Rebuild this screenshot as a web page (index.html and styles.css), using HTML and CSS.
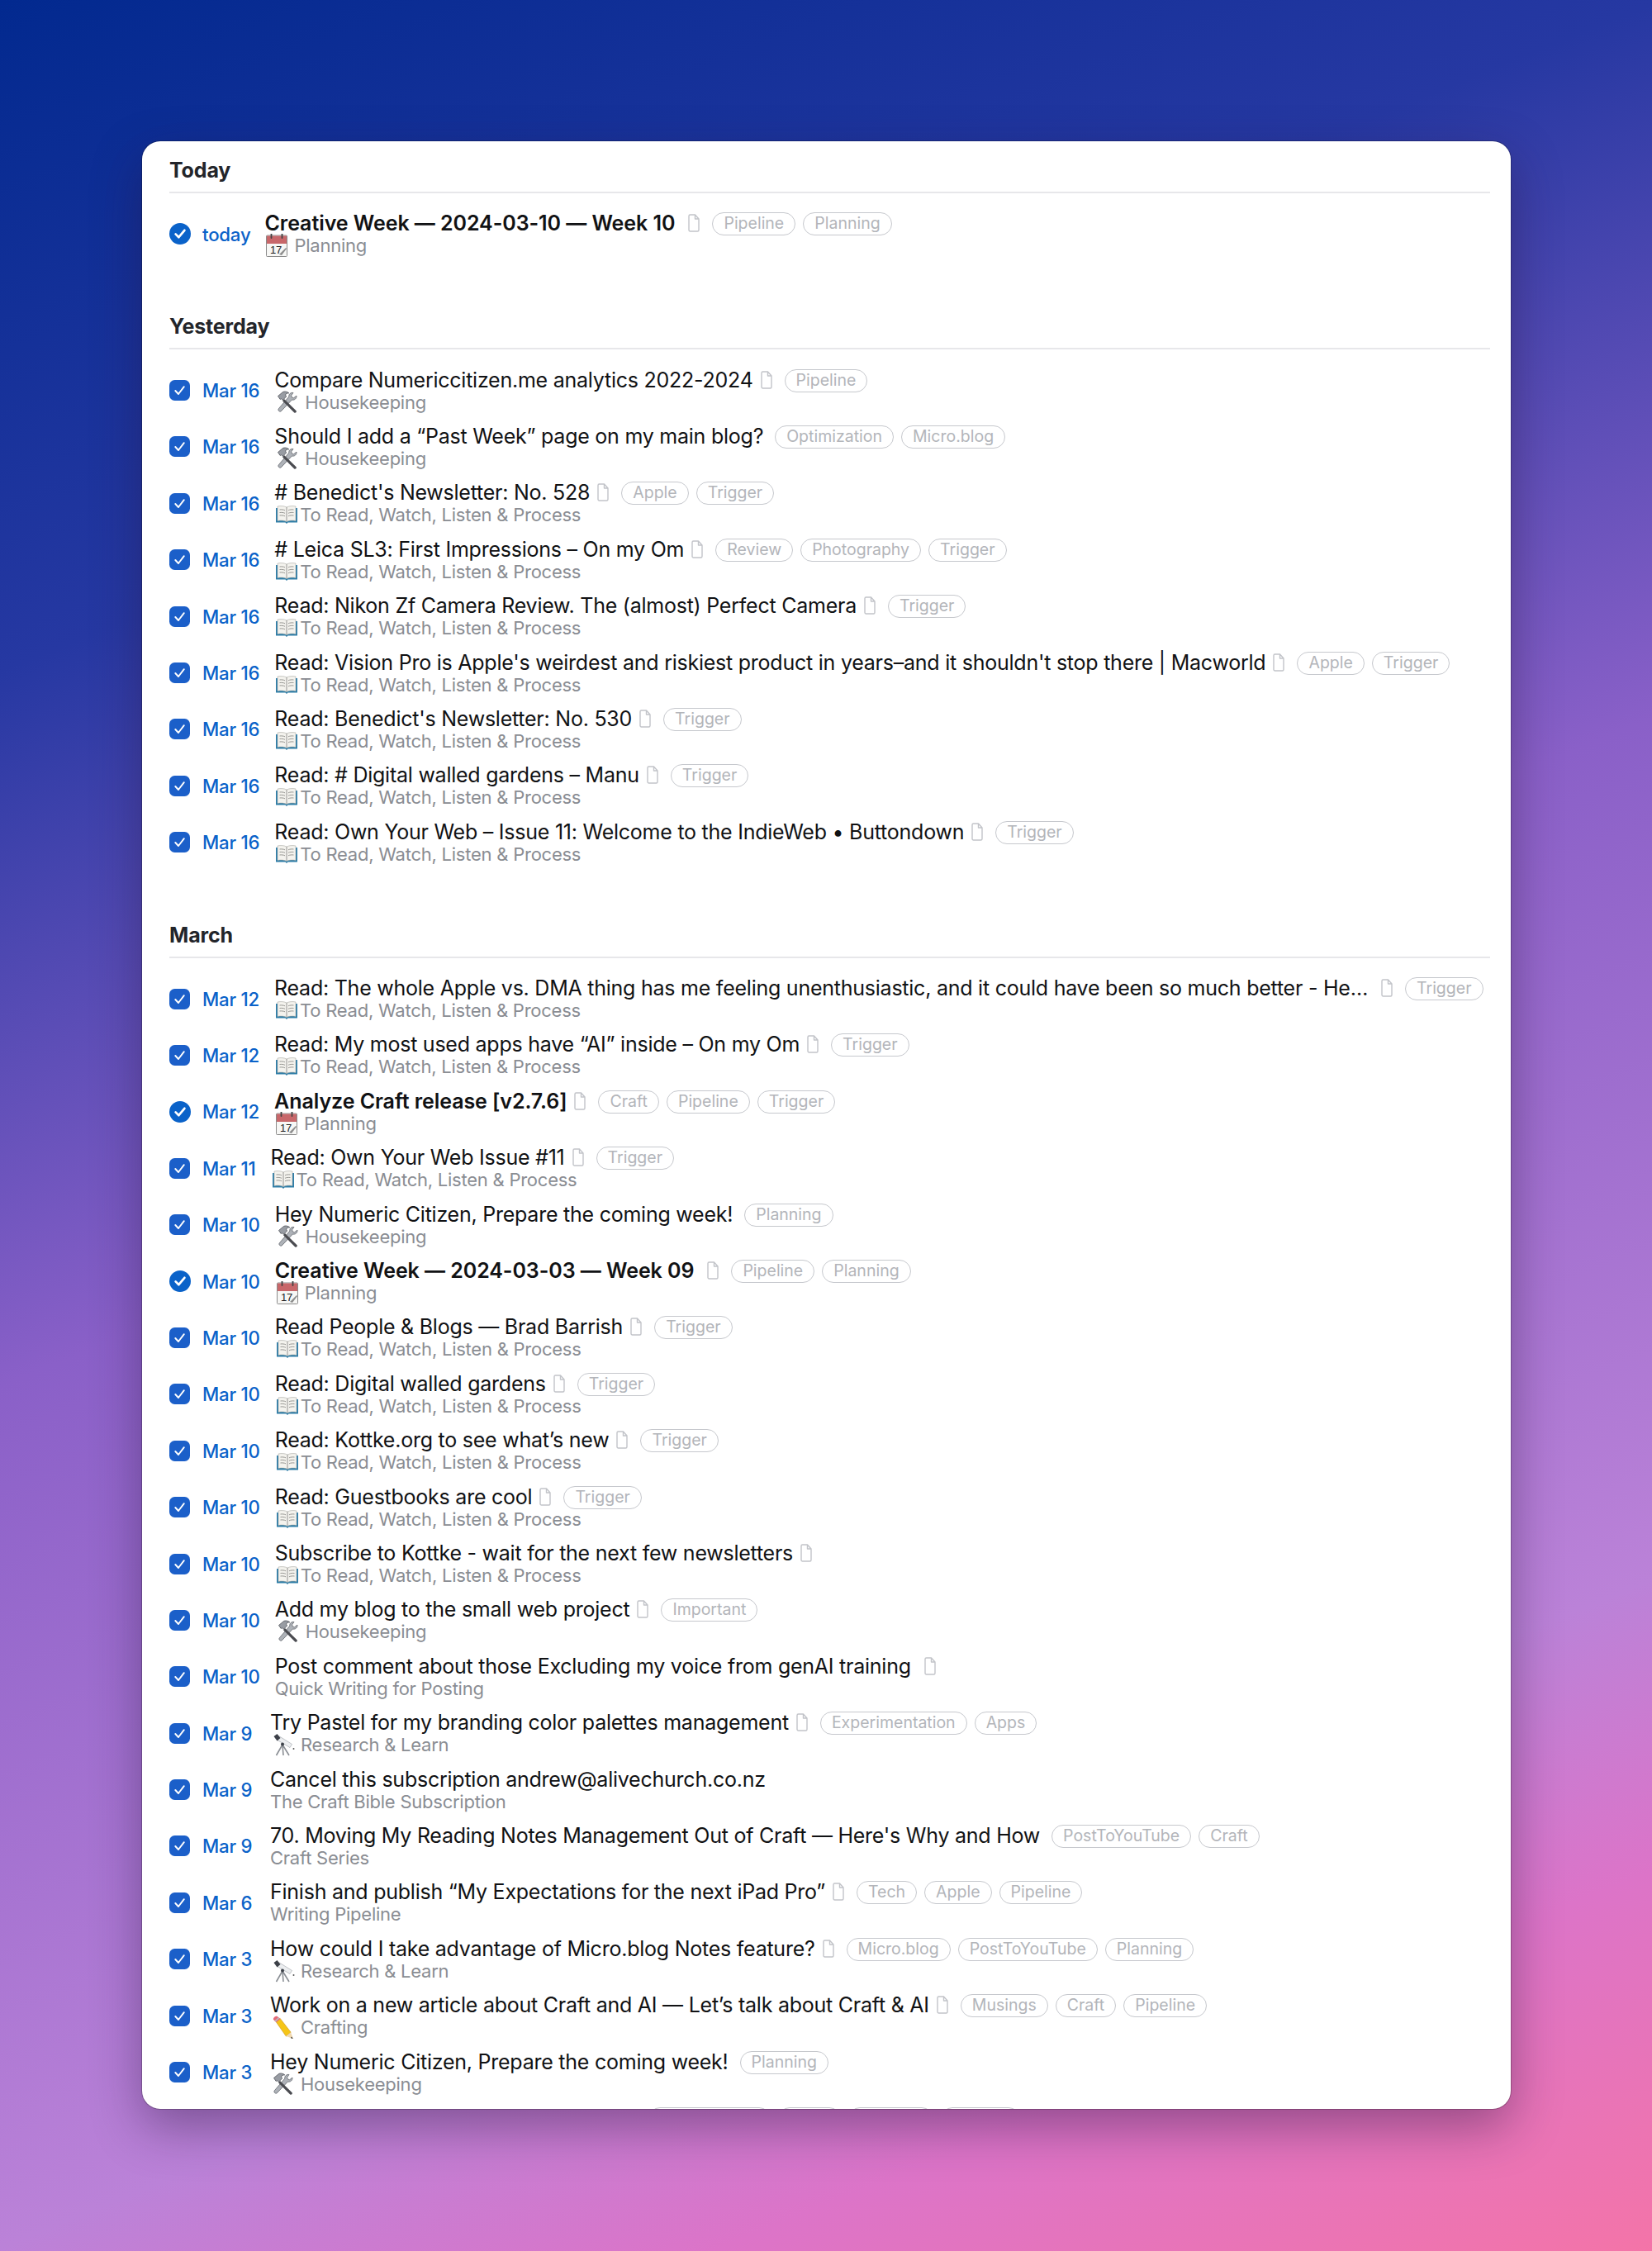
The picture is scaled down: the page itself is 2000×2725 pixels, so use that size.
FILE: index.html
```html
<!DOCTYPE html>
<html lang="en">
  <head>
    <meta charset="UTF-8" />
    <title>Logbook</title>
    <link rel="stylesheet" href="styles.css">
  </head>
  <body>
    <svg class="sprites" width="0" height="0">
      <symbol id="box" viewBox="0 0 25 25">
        <rect width="25" height="25" rx="6.5" fill="#1b5fc9" />
        <path d="M7.3 13l3.7 4 6.8-8.8" fill="none" stroke="#fff" stroke-width="1.9" stroke-linecap="round" stroke-linejoin="round" />
      </symbol>
      <symbol id="circle" viewBox="0 0 26 26">
        <circle cx="13" cy="13" r="13" fill="#0a62c9" />
        <path d="M7.600 13.400l3.800 3.800 7-8.400" fill="none" stroke="#fff" stroke-width="2.700" stroke-linecap="round" stroke-linejoin="round" />
      </symbol>
      <symbol id="doc" viewBox="0 0 14 22">
        <path d="M2.500 1h6l4.500 5v13.500a1.500 1.500 0 0 1-1.500 1.500h-9A1.500 1.500 0 0 1 1 19.500V2.500A1.500 1.500 0 0 1 2.500 1zM8.500 1v5H13" fill="none" stroke="#c2c4c9" stroke-width="1.400" stroke-linejoin="round" />
      </symbol>
      <symbol id="tools" viewBox="0 0 28 28">
        <path d="M21 2.500c-3-.6-5.600 1.600-5.200 4.700L3.300 21.800c-1.300 1.600.9 4.300 2.900 3.100L19.400 11c2.900.8 6-1.500 5.600-4.900l-3.400 2.600-2.400-.7-.5-2.300z" fill="#aeb2b8" stroke="#62666c" stroke-width=".8" />
        <path d="M10 10l14.600 14.300c1.100 1.300-1.100 3.400-2.400 2.200L8 12.200z" fill="#4a4b50" />
        <path d="M2.500 6.500L8.800 1.300c2.700-.8 5.400 0 7 1.600-2.200 0-3.800.600-4.300 2.100l1.100 2.100-4.300 4.300-1.600-1.600-1.600.600z" fill="#989ca3" stroke="#53565c" stroke-width=".8" />
      </symbol>
      <symbol id="book" viewBox="0 0 26 22">
        <path d="M0 3h26v17.500H14.500l-1.500 1.500-1.500-1.500H0z" fill="#2e7ea8" />
        <path d="M2 1c4-.8 8-.5 11 1 3-1.500 7-1.800 11-1v17.500c-4-.8-8-.5-11 1-3-1.500-7-1.800-11-1z" fill="#f4f3ee" stroke="#a9a9a4" stroke-width=".6" />
        <path d="M13 2v17M4.500 5c2.500-.3 4.800 0 6.500.8M4.500 8.500c2.500-.3 4.800 0 6.500.8M4.500 12c2.500-.3 4.800 0 6.500.8M15 5.800c1.700-.8 4-1.100 6.500-.8M15 9.300c1.700-.8 4-1.100 6.500-.8M15 12.800c1.700-.8 4-1.100 6.500-.8" fill="none" stroke="#8b8b88" stroke-width=".9" />
      </symbol>
      <symbol id="calendar" viewBox="0 0 26 28">
        <rect x=".5" y="2" width="25" height="25.500" rx="1" fill="#f7f7f5" stroke="#8b8b8b" />
        <rect x="1" y="2.500" width="24" height="9.500" fill="#c8676a" />
        <path d="M6.500 0v5M19.500 0v5" stroke="#444" stroke-width="1.800" stroke-linecap="round" />
        <path d="M16 25l8-8 1 1-6 8z" fill="#8d8d8d" />
      </symbol>
      <symbol id="telescope" viewBox="0 0 28 28">
        <path d="M6 8l16 9.500 2.500-4L8.500 3.500z" fill="#eceef0" stroke="#a8acb2" stroke-width=".7" />
        <path d="M2.500 4l4-3 4 5-4 3.500z" fill="#3c4048" />
        <path d="M13 14L5.500 27M13 14l1 13M13 14l8 13" fill="none" stroke="#8a8e94" stroke-width="1.600" />
        <circle cx="13" cy="13.500" r="2" fill="#3c4048" />
        <circle cx="26.500" cy="19" r="1" fill="#555" />
      </symbol>
      <symbol id="pencil" viewBox="0 0 28 30">
        <path d="M5.500 8l5-4.500L24 21l-6 5z" fill="#f5c518" stroke="#c78f12" stroke-width=".6" />
        <path d="M2 5c-.5-2 2.500-5 5-4l4 3-5.500 4.500z" fill="#e66a78" />
        <path d="M3.800 6.200l4.500-4 1.500 1-5 4.500z" fill="#b8bcc2" />
        <path d="M18 26l6-5 2.800 8z" fill="#f0d8b0" />
        <path d="M25 26.500l1.800 2.500-3-.9z" fill="#333" />
      </symbol>
    </svg>

    <main class="window">
      <section class="group">
        <h2 class="group-head">Today</h2>
        <ul class="rows">
          <li class="row row-today">
            <svg class="check check-round"><use href="#circle" /></svg>
            <span class="date">today</span>
            <div class="body">
              <div class="line"><span class="title strong">Creative Week — 2024-03-10 — Week 10</span><svg class="doc doc-wide"><use href="#doc" /></svg><span class="tag">Pipeline</span><span class="tag">Planning</span></div>
              <div class="sub"><svg class="emoji em-cal" viewBox="0 0 26 28"><use href="#calendar" width="26" height="28" /><text x="5" y="24" class="cal-day">17</text></svg>Planning</div>
            </div>
          </li>
        </ul>
      </section>

      <section class="group">
        <h2 class="group-head">Yesterday</h2>
        <ul class="rows">
          <li class="row">
            <svg class="check"><use href="#box" /></svg>
            <span class="date">Mar 16</span>
            <div class="body">
              <div class="line"><span class="title">Compare Numericcitizen.me analytics 2022-2024</span><svg class="doc"><use href="#doc" /></svg><span class="tag">Pipeline</span></div>
              <div class="sub"><svg class="emoji em-tools"><use href="#tools" /></svg>Housekeeping</div>
            </div>
          </li>
          <li class="row">
            <svg class="check"><use href="#box" /></svg>
            <span class="date">Mar 16</span>
            <div class="body">
              <div class="line"><span class="title">Should I add a “Past Week” page on my main blog?</span><span class="tag tag-first">Optimization</span><span class="tag">Micro.blog</span></div>
              <div class="sub"><svg class="emoji em-tools"><use href="#tools" /></svg>Housekeeping</div>
            </div>
          </li>
          <li class="row">
            <svg class="check"><use href="#box" /></svg>
            <span class="date">Mar 16</span>
            <div class="body">
              <div class="line"><span class="title"># Benedict's Newsletter: No. 528</span><svg class="doc"><use href="#doc" /></svg><span class="tag">Apple</span><span class="tag">Trigger</span></div>
              <div class="sub"><svg class="emoji em-book"><use href="#book" /></svg>To Read, Watch, Listen &amp; Process</div>
            </div>
          </li>
          <li class="row">
            <svg class="check"><use href="#box" /></svg>
            <span class="date">Mar 16</span>
            <div class="body">
              <div class="line"><span class="title"># Leica SL3: First Impressions – On my Om</span><svg class="doc"><use href="#doc" /></svg><span class="tag">Review</span><span class="tag">Photography</span><span class="tag">Trigger</span></div>
              <div class="sub"><svg class="emoji em-book"><use href="#book" /></svg>To Read, Watch, Listen &amp; Process</div>
            </div>
          </li>
          <li class="row">
            <svg class="check"><use href="#box" /></svg>
            <span class="date">Mar 16</span>
            <div class="body">
              <div class="line"><span class="title">Read: Nikon Zf Camera Review. The (almost) Perfect Camera</span><svg class="doc"><use href="#doc" /></svg><span class="tag">Trigger</span></div>
              <div class="sub"><svg class="emoji em-book"><use href="#book" /></svg>To Read, Watch, Listen &amp; Process</div>
            </div>
          </li>
          <li class="row">
            <svg class="check"><use href="#box" /></svg>
            <span class="date">Mar 16</span>
            <div class="body">
              <div class="line"><span class="title">Read: Vision Pro is Apple's weirdest and riskiest product in years–and it shouldn't stop there | Macworld</span><svg class="doc"><use href="#doc" /></svg><span class="tag">Apple</span><span class="tag">Trigger</span></div>
              <div class="sub"><svg class="emoji em-book"><use href="#book" /></svg>To Read, Watch, Listen &amp; Process</div>
            </div>
          </li>
          <li class="row">
            <svg class="check"><use href="#box" /></svg>
            <span class="date">Mar 16</span>
            <div class="body">
              <div class="line"><span class="title">Read: Benedict's Newsletter: No. 530</span><svg class="doc"><use href="#doc" /></svg><span class="tag">Trigger</span></div>
              <div class="sub"><svg class="emoji em-book"><use href="#book" /></svg>To Read, Watch, Listen &amp; Process</div>
            </div>
          </li>
          <li class="row">
            <svg class="check"><use href="#box" /></svg>
            <span class="date">Mar 16</span>
            <div class="body">
              <div class="line"><span class="title">Read: # Digital walled gardens – Manu</span><svg class="doc"><use href="#doc" /></svg><span class="tag">Trigger</span></div>
              <div class="sub"><svg class="emoji em-book"><use href="#book" /></svg>To Read, Watch, Listen &amp; Process</div>
            </div>
          </li>
          <li class="row">
            <svg class="check"><use href="#box" /></svg>
            <span class="date">Mar 16</span>
            <div class="body">
              <div class="line"><span class="title">Read: Own Your Web – Issue 11: Welcome to the IndieWeb • Buttondown</span><svg class="doc"><use href="#doc" /></svg><span class="tag">Trigger</span></div>
              <div class="sub"><svg class="emoji em-book"><use href="#book" /></svg>To Read, Watch, Listen &amp; Process</div>
            </div>
          </li>
        </ul>
      </section>

      <section class="group">
        <h2 class="group-head">March</h2>
        <ul class="rows">
          <li class="row">
            <svg class="check"><use href="#box" /></svg>
            <span class="date">Mar 12</span>
            <div class="body">
              <div class="line"><span class="title">Read: The whole Apple vs. DMA thing has me feeling unenthusiastic, and it could have been so much better - He…</span><svg class="doc doc-wide"><use href="#doc" /></svg><span class="tag">Trigger</span></div>
              <div class="sub"><svg class="emoji em-book"><use href="#book" /></svg>To Read, Watch, Listen &amp; Process</div>
            </div>
          </li>
          <li class="row">
            <svg class="check"><use href="#box" /></svg>
            <span class="date">Mar 12</span>
            <div class="body">
              <div class="line"><span class="title">Read: My most used apps have “AI” inside – On my Om</span><svg class="doc"><use href="#doc" /></svg><span class="tag">Trigger</span></div>
              <div class="sub"><svg class="emoji em-book"><use href="#book" /></svg>To Read, Watch, Listen &amp; Process</div>
            </div>
          </li>
          <li class="row">
            <svg class="check check-round"><use href="#circle" /></svg>
            <span class="date">Mar 12</span>
            <div class="body">
              <div class="line"><span class="title strong">Analyze Craft release [v2.7.6]</span><svg class="doc"><use href="#doc" /></svg><span class="tag">Craft</span><span class="tag">Pipeline</span><span class="tag">Trigger</span></div>
              <div class="sub"><svg class="emoji em-cal" viewBox="0 0 26 28"><use href="#calendar" width="26" height="28" /><text x="5" y="24" class="cal-day">17</text></svg>Planning</div>
            </div>
          </li>
          <li class="row">
            <svg class="check"><use href="#box" /></svg>
            <span class="date">Mar 11</span>
            <div class="body">
              <div class="line"><span class="title">Read: Own Your Web Issue #11</span><svg class="doc"><use href="#doc" /></svg><span class="tag">Trigger</span></div>
              <div class="sub"><svg class="emoji em-book"><use href="#book" /></svg>To Read, Watch, Listen &amp; Process</div>
            </div>
          </li>
          <li class="row">
            <svg class="check"><use href="#box" /></svg>
            <span class="date">Mar 10</span>
            <div class="body">
              <div class="line"><span class="title">Hey Numeric Citizen, Prepare the coming week!</span><span class="tag tag-first">Planning</span></div>
              <div class="sub"><svg class="emoji em-tools"><use href="#tools" /></svg>Housekeeping</div>
            </div>
          </li>
          <li class="row">
            <svg class="check check-round"><use href="#circle" /></svg>
            <span class="date">Mar 10</span>
            <div class="body">
              <div class="line"><span class="title strong">Creative Week — 2024-03-03 — Week 09</span><svg class="doc doc-wide"><use href="#doc" /></svg><span class="tag">Pipeline</span><span class="tag">Planning</span></div>
              <div class="sub"><svg class="emoji em-cal" viewBox="0 0 26 28"><use href="#calendar" width="26" height="28" /><text x="5" y="24" class="cal-day">17</text></svg>Planning</div>
            </div>
          </li>
          <li class="row">
            <svg class="check"><use href="#box" /></svg>
            <span class="date">Mar 10</span>
            <div class="body">
              <div class="line"><span class="title">Read People &amp; Blogs — Brad Barrish</span><svg class="doc"><use href="#doc" /></svg><span class="tag">Trigger</span></div>
              <div class="sub"><svg class="emoji em-book"><use href="#book" /></svg>To Read, Watch, Listen &amp; Process</div>
            </div>
          </li>
          <li class="row">
            <svg class="check"><use href="#box" /></svg>
            <span class="date">Mar 10</span>
            <div class="body">
              <div class="line"><span class="title">Read: Digital walled gardens</span><svg class="doc"><use href="#doc" /></svg><span class="tag">Trigger</span></div>
              <div class="sub"><svg class="emoji em-book"><use href="#book" /></svg>To Read, Watch, Listen &amp; Process</div>
            </div>
          </li>
          <li class="row">
            <svg class="check"><use href="#box" /></svg>
            <span class="date">Mar 10</span>
            <div class="body">
              <div class="line"><span class="title">Read: Kottke.org to see what’s new</span><svg class="doc"><use href="#doc" /></svg><span class="tag">Trigger</span></div>
              <div class="sub"><svg class="emoji em-book"><use href="#book" /></svg>To Read, Watch, Listen &amp; Process</div>
            </div>
          </li>
          <li class="row">
            <svg class="check"><use href="#box" /></svg>
            <span class="date">Mar 10</span>
            <div class="body">
              <div class="line"><span class="title">Read: Guestbooks are cool</span><svg class="doc"><use href="#doc" /></svg><span class="tag">Trigger</span></div>
              <div class="sub"><svg class="emoji em-book"><use href="#book" /></svg>To Read, Watch, Listen &amp; Process</div>
            </div>
          </li>
          <li class="row">
            <svg class="check"><use href="#box" /></svg>
            <span class="date">Mar 10</span>
            <div class="body">
              <div class="line"><span class="title">Subscribe to Kottke - wait for the next few newsletters</span><svg class="doc"><use href="#doc" /></svg></div>
              <div class="sub"><svg class="emoji em-book"><use href="#book" /></svg>To Read, Watch, Listen &amp; Process</div>
            </div>
          </li>
          <li class="row">
            <svg class="check"><use href="#box" /></svg>
            <span class="date">Mar 10</span>
            <div class="body">
              <div class="line"><span class="title">Add my blog to the small web project</span><svg class="doc"><use href="#doc" /></svg><span class="tag">Important</span></div>
              <div class="sub"><svg class="emoji em-tools"><use href="#tools" /></svg>Housekeeping</div>
            </div>
          </li>
          <li class="row">
            <svg class="check"><use href="#box" /></svg>
            <span class="date">Mar 10</span>
            <div class="body">
              <div class="line"><span class="title">Post comment about those Excluding my voice from genAI training</span><svg class="doc doc-wide"><use href="#doc" /></svg></div>
              <div class="sub">Quick Writing for Posting</div>
            </div>
          </li>
          <li class="row">
            <svg class="check"><use href="#box" /></svg>
            <span class="date">Mar 9</span>
            <div class="body">
              <div class="line"><span class="title">Try Pastel for my branding color palettes management</span><svg class="doc"><use href="#doc" /></svg><span class="tag">Experimentation</span><span class="tag">Apps</span></div>
              <div class="sub"><svg class="emoji em-scope"><use href="#telescope" /></svg>Research &amp; Learn</div>
            </div>
          </li>
          <li class="row">
            <svg class="check"><use href="#box" /></svg>
            <span class="date">Mar 9</span>
            <div class="body">
              <div class="line"><span class="title">Cancel this subscription andrew@alivechurch.co.nz</span></div>
              <div class="sub">The Craft Bible Subscription</div>
            </div>
          </li>
          <li class="row">
            <svg class="check"><use href="#box" /></svg>
            <span class="date">Mar 9</span>
            <div class="body">
              <div class="line"><span class="title">70. Moving My Reading Notes Management Out of Craft — Here's Why and How</span><span class="tag tag-first">PostToYouTube</span><span class="tag">Craft</span></div>
              <div class="sub">Craft Series</div>
            </div>
          </li>
          <li class="row">
            <svg class="check"><use href="#box" /></svg>
            <span class="date">Mar 6</span>
            <div class="body">
              <div class="line"><span class="title">Finish and publish “My Expectations for the next iPad Pro”</span><svg class="doc"><use href="#doc" /></svg><span class="tag">Tech</span><span class="tag">Apple</span><span class="tag">Pipeline</span></div>
              <div class="sub">Writing Pipeline</div>
            </div>
          </li>
          <li class="row">
            <svg class="check"><use href="#box" /></svg>
            <span class="date">Mar 3</span>
            <div class="body">
              <div class="line"><span class="title">How could I take advantage of Micro.blog Notes feature?</span><svg class="doc"><use href="#doc" /></svg><span class="tag">Micro.blog</span><span class="tag">PostToYouTube</span><span class="tag">Planning</span></div>
              <div class="sub"><svg class="emoji em-scope"><use href="#telescope" /></svg>Research &amp; Learn</div>
            </div>
          </li>
          <li class="row">
            <svg class="check"><use href="#box" /></svg>
            <span class="date">Mar 3</span>
            <div class="body">
              <div class="line"><span class="title">Work on a new article about Craft and AI — Let’s talk about Craft &amp; AI</span><svg class="doc"><use href="#doc" /></svg><span class="tag">Musings</span><span class="tag">Craft</span><span class="tag">Pipeline</span></div>
              <div class="sub"><svg class="emoji em-pencil"><use href="#pencil" /></svg>Crafting</div>
            </div>
          </li>
          <li class="row">
            <svg class="check"><use href="#box" /></svg>
            <span class="date">Mar 3</span>
            <div class="body">
              <div class="line"><span class="title">Hey Numeric Citizen, Prepare the coming week!</span><span class="tag tag-first">Planning</span></div>
              <div class="sub"><svg class="emoji em-tools"><use href="#tools" /></svg>Housekeeping</div>
            </div>
          </li>
          <li class="row">
            <svg class="check"><use href="#box" /></svg>
            <span class="date"></span>
            <div class="body">
              <div class="line line-cut"><span class="tag tag-a"></span><span class="tag tag-b"></span><span class="tag tag-c"></span><span class="tag tag-d"></span></div>
              <div class="sub"></div>
            </div>
          </li>
        </ul>
      </section>
    </main>
  </body>
</html>
```

FILE: styles.css
```css
* {
  box-sizing: border-box;
}
html,
body {
  margin: 0;
  height: 2725px;
}
body {
  padding-top: 171px;
  overflow: hidden;
  font-family: Inter, "Liberation Sans", sans-serif;
  color: #111214;
  background: linear-gradient(
    158deg,
    #02298f 0%,
    #2638a2 23%,
    #8a60c8 47.5%,
    #bb82d8 77%,
    #dc74c8 87%,
    #f474a8 100%
  );
}
.sprites {
  position: absolute;
}
.window {
  width: 1657px;
  height: 2382px;
  margin-left: 172px;
  padding: 0 25px 0 33px;
  overflow: hidden;
  background: #fff;
  border-radius: 22px;
  box-shadow: 0 0 0 1px rgba(0, 0, 0, 0.22), 0 22px 60px rgba(40, 20, 60, 0.42);
}
.group {
  padding-bottom: 63px;
}
.group:first-child .group-head {
  margin-top: 20px;
}
.group-head {
  margin: 0 0 15px;
  padding-bottom: 11px;
  font-size: 25px;
  line-height: 30px;
  font-weight: 700;
  letter-spacing: -0.15px;
  color: #23252a;
  border-bottom: 2px solid #e7e7ea;
}
.rows {
  list-style: none;
  margin: 0;
  padding: 0;
}
.row {
  display: flex;
  align-items: center;
  height: 68.4px;
}
.check {
  flex: none;
  width: 25px;
  height: 25px;
  margin-right: 15px;
}
.check-round {
  width: 26px;
  height: 26px;
  margin-right: 14px;
}
.date {
  flex: none;
  min-width: 64px;
  margin-right: 18px;
  font-size: 22.2px;
  font-weight: 500;
  letter-spacing: -0.2px;
  color: #0a62c9;
}
.row-today .date {
  min-width: 0;
  margin-right: 17px;
}
.line {
  display: flex;
  align-items: center;
  height: 28px;
  white-space: nowrap;
}
.line-cut {
  padding-left: 449px;
}
.title {
  font-size: 25px;
  letter-spacing: -0.24px;
  line-height: 28px;
}
.strong {
  font-weight: 600;
  letter-spacing: -0.06px;
}
.doc {
  flex: none;
  width: 14px;
  height: 22px;
  margin-left: 9px;
}
.doc-wide {
  margin-left: 16px;
}
.tag {
  flex: none;
  height: 28px;
  margin: 2px 0 0 9px;
  padding: 0 13px;
  font-size: 19.5px;
  line-height: 25px;
  color: #b3b5ba;
  border: 1.5px solid #c6c8cd;
  border-radius: 14px;
}
.doc + .tag {
  margin-left: 15px;
}
.tag-first {
  margin-left: 14px;
}
.tag-a {
  width: 148px;
}
.tag-b {
  width: 76px;
}
.tag-c {
  width: 103px;
}
.tag-d {
  width: 96px;
}
.sub {
  display: flex;
  align-items: center;
  height: 26px;
  font-size: 22px;
  letter-spacing: -0.24px;
  color: #8a8d93;
  white-space: nowrap;
}
.emoji {
  flex: none;
  margin-left: 2px;
}
.em-tools {
  width: 28px;
  height: 28px;
  margin-right: 7px;
}
.em-book {
  width: 26px;
  height: 22px;
  margin-right: 3px;
}
.em-cal {
  width: 26px;
  height: 28px;
  margin-right: 8px;
}
.em-scope {
  width: 28px;
  height: 28px;
  margin-right: 7px;
}
.em-pencil {
  width: 27px;
  height: 29px;
  margin-right: 8px;
}
.cal-day {
  font-family: "Liberation Sans", sans-serif;
  font-size: 13px;
  fill: #222;
}
```
